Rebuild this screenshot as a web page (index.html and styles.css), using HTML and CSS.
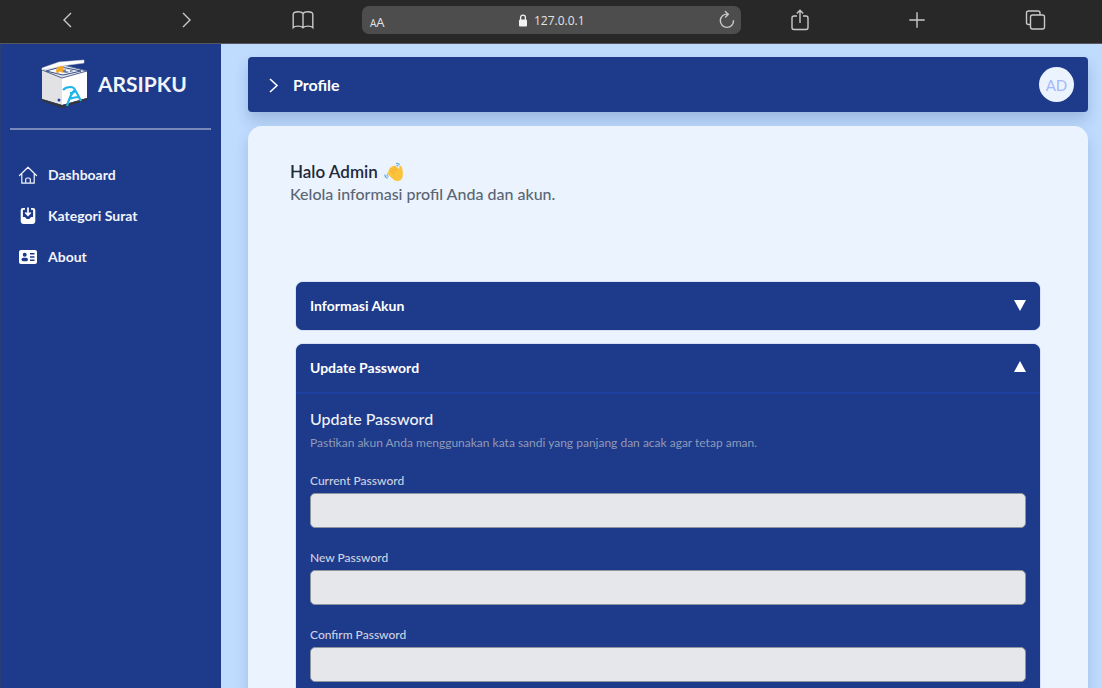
FILE: index.html
```html
<!DOCTYPE html>
<html lang="id">
<head>
<meta charset="utf-8">
<meta name="viewport" content="width=device-width, initial-scale=1">
<title>Arsipku - Profile</title>
<link rel="stylesheet" href="styles.css">
</head>
<body>
<header class="browser">
  <button class="browser-btn" type="button" aria-label="Back"><svg width="22" height="22" viewBox="0 0 22 22"><path d="M14 4 7 11l7 7"/></svg></button>
  <button class="browser-btn" type="button" aria-label="Forward"><svg width="22" height="22" viewBox="0 0 22 22"><path d="m8 4 7 7-7 7"/></svg></button>
  <button class="browser-btn" type="button" aria-label="Bookmarks"><svg width="24" height="22" viewBox="0 0 24 22"><path d="M12 4.500C11 3 9 2.700 7 2.700S2.500 3 2.200 5v13.500c1-1.200 2.800-1.400 4.800-1.400s4 .4 5 1.600c1-1.200 3-1.600 5-1.600s3.800.2 4.800 1.400V5c-.3-2-2.800-2.300-4.800-2.300S13 3 12 4.500zv14"/></svg></button>
  <div class="address">
    <button class="address-btn text-size" type="button" aria-label="Text size"><span class="small-a">A</span>A</button>
    <span class="address-url"><svg width="10" height="13" viewBox="0 0 10 13"><rect x="1" y="5.500" width="8" height="7" rx="1" fill="#f1f1f1"/><path d="M2.600 6V3.500a2.400 2.400 0 0 1 4.800 0V6" fill="none" stroke="#f1f1f1" stroke-width="1.300"/></svg>127.0.0.1</span>
    <button class="address-btn" type="button" aria-label="Reload"><svg width="18" height="20" viewBox="0 0 18 20"><path d="M15.500 10.200A6.600 6.600 0 1 1 9.500 4.200M7 1.200l3.300 3L7.200 7.400"/></svg></button>
  </div>
  <button class="browser-btn" type="button" aria-label="Share"><svg width="22" height="24" viewBox="0 0 22 24"><path d="M8 8H5a2 2 0 0 0-2 2v9.500a2 2 0 0 0 2 2h12a2 2 0 0 0 2-2V10a2 2 0 0 0-2-2h-3M11 15V2.500M7.800 5.500 11 2.300l3.200 3.200"/></svg></button>
  <button class="browser-btn" type="button" aria-label="New tab"><svg width="20" height="20" viewBox="0 0 20 20"><path d="M10 2.300v15.400M2.300 10h15.400"/></svg></button>
  <button class="browser-btn" type="button" aria-label="Tabs"><svg width="22" height="22" viewBox="0 0 22 22"><path d="M6.500 15.500h-2a2 2 0 0 1-2-2V4a2 2 0 0 1 2-2H14a2 2 0 0 1 2 2v2"/><rect x="6.500" y="6" width="14" height="14" rx="2"/></svg></button>
</header>
<div class="app">
  <aside class="sidebar">
    <a class="brand" href="#">
      <svg class="brand-logo" width="48" height="50" viewBox="0 0 48 50">
        <path d="m1 10 20 8v28L1 40z" fill="#e2e2e5"/>
        <path d="m21 18 25-6v27l-25 7z" fill="#fff"/>
        <path d="m1 40 20 6 25-7v2l-25 8-20-7z" fill="#34363f"/>
        <path d="m1 11 18-6 27 7-25 7z" fill="#dfe3ef" stroke="#53658e"/>
        <path d="m5 12 15-4 20 4-18 4z" fill="#f7f8fb" stroke="#3b5085"/>
        <path d="m18 12 8-2 7 2-8 2z" fill="#6679a3"/>
        <path d="m25 11 4 1" stroke="#fff" stroke-width="2"/>
        <path d="M1 9 18 3l25-2v3L20 7 1 11z" fill="#fff" stroke="#d5d8e0" stroke-width=".5"/>
        <path d="m16 8 7-1-1 7-3-2-3 3-1-3z" fill="#f6a623"/>
        <circle cx="18" cy="41" r="1.500" fill="#25469a"/>
        <path d="M22 31c4-4 11-4 12 0 0 3-3 3-5 3M34 31c-4 3-6 9-8 16M34 31c2 3 4 7 6 11M28 40c3-1 6-2 10-2" fill="none" stroke="#20b5e9" stroke-width="2.200"/>
      </svg>
      <span class="brand-name">ARSIPKU</span>
    </a>
    <nav class="menu" aria-label="Menu">
      <a class="menu-link" href="#"><svg width="20" height="20" viewBox="0 0 20 20"><path d="M1.500 10.500 10 2.200l8.500 8.300M3.800 9v9.200h12.400V9M7.700 18v-3.500a1.500 1.500 0 0 1 1.500-1.500h1.600a1.500 1.500 0 0 1 1.500 1.500V18" fill="none" stroke="#f1f4fb" stroke-width="1.200" stroke-linejoin="round" stroke-linecap="round"/></svg>Dashboard</a>
      <a class="menu-link" href="#"><svg width="20" height="20" viewBox="0 0 20 20"><path fill="#fff" d="M5 2h2v1.800H5.800a.9.900 0 0 0-.9.900V11h1.600c.6 0 .9.300 1.100.8.300.8 1.200 1.300 2.400 1.300s2.100-.5 2.400-1.300c.2-.5.500-.8 1.100-.8h1.600V4.700a.9.900 0 0 0-.9-.9H13V2h2a2.300 2.300 0 0 1 2.300 2.300V15a3 3 0 0 1-3 3H5.700a3 3 0 0 1-3-3V4.300A2.300 2.300 0 0 1 5 2z"/><path d="M10 1.500v7M7.300 6.500 10 9.200l2.700-2.700" fill="none" stroke="#fff" stroke-width="1.700"/></svg>Kategori Surat</a>
      <a class="menu-link" href="#"><svg width="20" height="20" viewBox="0 0 20 20"><rect x="1" y="3" width="18" height="14" rx="2" fill="#fff"/><g fill="#1e3a8a"><circle cx="6.700" cy="7.700" r="2"/><rect x="3.500" y="10.800" width="6.500" height="3.500" rx="1.700"/><path d="M12 6h4.500v1.500H12zM12 9.200h4.500v1.500H12zM12 12.400h4.500v1.500H12z"/></g></svg>About</a>
    </nav>
  </aside>
  <main class="main">
    <div class="topbar">
      <button class="topbar-toggle" type="button" aria-label="Menu"><svg width="12" height="16" viewBox="0 0 12 16"><path d="m2 2 7 6.500L2 15" fill="none" stroke="#fff" stroke-width="1.600"/></svg></button>
      <h1 class="topbar-title">Profile</h1>
      <button class="avatar" type="button">AD</button>
    </div>
    <section class="card">
      <h2 class="greeting">Halo Admin
        <svg width="20" height="20" viewBox="0 0 20 20" aria-hidden="true"><path d="M4.600 9.200c-.7-.9.400-1.900 1.200-1.200L5.500 7c-.5-1.100.9-1.900 1.700-1l.2-1c.2-1.200 1.500-1.300 2.100-.4l.5-.5c.8-.8 1.800-.4 2.100.5l3.200 2.500V5c0-1.400 1.900-1.700 2.400-.2.900 2.700 1.300 5.600 1.100 8.700-.2 3.300-2.300 5.500-5.200 5.500-2.400 0-4-1.300-5.500-2.800l-4.600-4.400c-.9-.9 0-2 1-1.500z" fill="#fbc33b"/><path d="m5.800 8 4.200 4M7.400 6l4.300 4.500M9.500 4.600l3.800 4.200" stroke="#eda02c" stroke-width=".7" fill="none"/><path d="M12 1.500c1.500-.6 3 .1 3.500 1.500M12.500 3.500c.8-.2 1.300 0 1.700.7M1 12.500c-.3 1.800.8 3.400 2.700 3.700M3 12.500c0 1 .5 1.700 1.500 2" stroke="#69aedb" stroke-width="1.300" fill="none"/></svg>
      </h2>
      <p class="subtitle">Kelola informasi profil Anda dan akun.</p>
      <div class="accordion">
        <section class="panel">
          <button class="panel-toggle" type="button" aria-expanded="false">Informasi Akun<svg width="12" height="12" viewBox="0 0 12 12"><path d="M0 1h12L6 12z" fill="#fff"/></svg></button>
        </section>
        <section class="panel">
          <button class="panel-toggle" type="button" aria-expanded="true">Update Password<svg width="12" height="12" viewBox="0 0 12 12"><path d="m6 0 6 11H0z" fill="#fff"/></svg></button>
          <form class="panel-body">
            <h3 class="form-title">Update Password</h3>
            <p class="form-note">Pastikan akun Anda menggunakan kata sandi yang panjang dan acak agar tetap aman.</p>
            <div class="field"><label for="current">Current Password</label><input id="current" type="password"></div>
            <div class="field"><label for="new">New Password</label><input id="new" type="password"></div>
            <div class="field"><label for="confirm">Confirm Password</label><input id="confirm" type="password"></div>
          </form>
        </section>
      </div>
    </section>
  </main>
</div>
</body>
</html>
```
FILE: styles.css
```css
* { box-sizing: border-box; }
body {
  margin: 0;
  height: 100vh;
  display: flex;
  flex-direction: column;
  overflow: hidden;
  background: #bfdbfe;
  font-family: Lato, "Open Sans", sans-serif;
  font-size: 14px;
}
h1, h2, h3, p { margin: 0; }
a { color: inherit; text-decoration: none; }
button { margin: 0; padding: 0; border: 0; background: none; color: inherit; font: inherit; cursor: pointer; }
svg { flex: none; }

.browser {
  display: grid;
  grid-template-columns: repeat(3, 1fr) 3.22fr repeat(3, 1fr);
  align-items: center;
  padding: 6px 8px 9px 9px;
  background: #282828;
  border-bottom: 1px solid #55585e;
}
.browser-btn { display: flex; justify-content: center; }
.browser-btn svg, .address-btn svg { fill: none; stroke: #c9c9c9; stroke-width: 1.4; }
.address {
  display: flex;
  align-items: center;
  justify-content: space-between;
  height: 28px;
  padding: 0 5px 0 8px;
  border-radius: 7px;
  background: #4d4d4d;
  color: #e3e3e3;
  font-family: "Open Sans", sans-serif;
}
.address-url { display: flex; align-items: center; gap: 6px; font-size: 12px; }
.text-size { padding-top: 5px; font-size: 13px; line-height: 16px; }
.small-a { font-size: 10px; }
.address-btn { display: flex; align-items: baseline; }

.app { flex: 1; min-height: 0; display: grid; grid-template-columns: 221px 1fr; }
.sidebar { padding: 0 10px 0 9px; background: #1e3a8a; color: #f1f4fb; border-left: 1px solid #293f78; }
.brand {
  display: flex;
  align-items: center;
  gap: 9px;
  height: 86px;
  padding: 0 0 5px 31px;
  border-bottom: 2px solid #7889b9;
}
.brand-name { font-size: 21px; font-weight: 700; }
.menu { display: flex; flex-direction: column; gap: 21px; padding: 35px 8px; }
.menu-link { display: flex; align-items: center; gap: 10px; font-weight: 700; line-height: 20px; }

.main { min-width: 0; padding: 13px 14px 0 27px; overflow-y: auto; scrollbar-width: none; }
.topbar {
  display: flex;
  align-items: center;
  height: 55px;
  padding: 0 14px 0 20px;
  border-radius: 4px;
  background: #1e3a8a;
  color: #fff;
  box-shadow: 0 8px 14px rgba(30, 58, 110, .22);
}
.topbar-toggle { display: flex; }
.topbar-title { flex: 1; margin-left: 13px; font-size: 16px; font-weight: 700; }
.avatar { width: 35px; height: 35px; border-radius: 50%; background: #ebf3ff; color: #a5b8fc; font-size: 15px; }

.card {
  position: relative;
  margin-top: 14px;
  padding: 35px 48px 28px 42px;
  border-radius: 14px;
  background: #ebf3ff;
  box-shadow: 0 8px 14px rgba(30, 58, 110, .18);
}
.greeting { display: flex; align-items: center; gap: 6px; color: #1f2937; font-size: 17px; font-weight: 600; line-height: 21px; }
.subtitle { color: #5b6674; font-size: 16px; font-weight: 500; line-height: 24px; }
.accordion { display: flex; flex-direction: column; gap: 14px; padding: 76px 0 0 6px; }
.panel { border-radius: 7px; background: #1e3a8a; color: #fff; box-shadow: 0 0 1px #1e3a8a; }
.panel-toggle {
  display: flex;
  align-items: center;
  justify-content: space-between;
  width: 100%;
  height: 48px;
  padding: 0 14px 2px;
  font-weight: 700;
}
.panel-body { padding: 13px 14px 28px; border-top: 2px solid #1e40a0; }
.form-title { color: #edf0f7; font-size: 16px; font-weight: 500; line-height: 24px; }
.form-note { color: #8e9ab9; font-size: 12px; line-height: 23px; }
.field { display: flex; flex-direction: column; gap: 3px; padding-top: 18px; margin-bottom: 3px; }
.field label { color: #cdd3e2; font-size: 12px; font-weight: 500; line-height: 18px; }
.field input { width: 100%; height: 35px; padding: 0 10px; border: 1px solid #8f949f; border-radius: 5px; background: #e5e7eb; font: inherit; }
```
